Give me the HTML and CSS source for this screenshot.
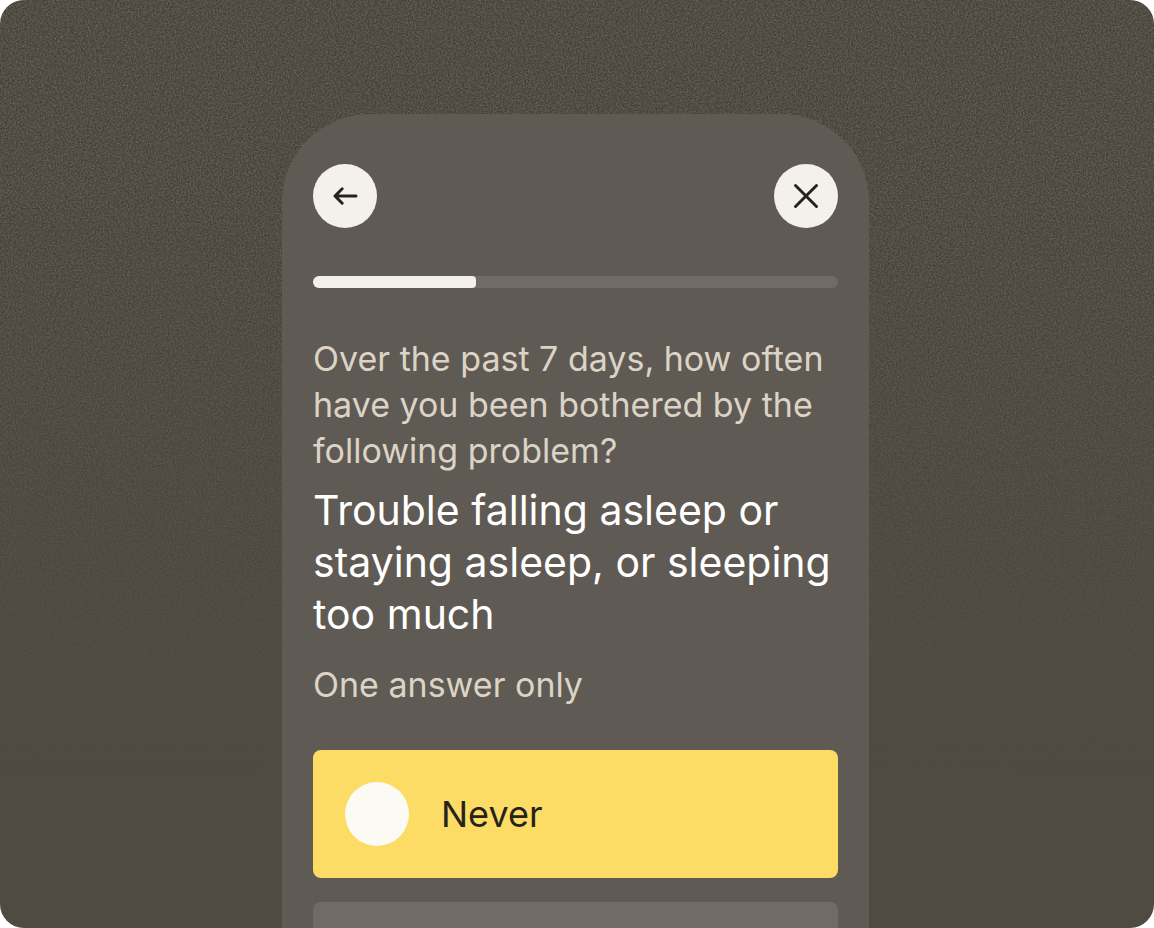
FILE: index.html
```html
<!DOCTYPE html>
<html lang="en">
<head>
<meta charset="utf-8">
<meta name="viewport" content="width=device-width, initial-scale=1">
<title>Questionnaire</title>
<link rel="stylesheet" href="styles.css">
</head>
<body>
<div class="stage">
  <svg class="grain" aria-hidden="true">
    <filter id="grain" x="0" y="0" width="100%" height="100%" color-interpolation-filters="sRGB">
      <feTurbulence type="fractalNoise" baseFrequency="0.6" numOctaves="2" seed="4"/>
      <feColorMatrix values="2 0 0 0 -0.580  2 0 0 0 -0.590  2 0 0 0 -0.650  0 0 0 0 1"/>
    </filter>
    <rect width="100%" height="100%" filter="url(#grain)"/>
  </svg>
  <main class="phone">
    <header class="nav">
      <button class="round-button" type="button" aria-label="Back">
        <svg class="icon" viewBox="0 0 32 32" aria-hidden="true"><path d="M27 16H6M13.200 8.800L6 16l7.200 7.200"/></svg>
      </button>
      <button class="round-button" type="button" aria-label="Close">
        <svg class="icon" viewBox="0 0 32 32" aria-hidden="true"><path d="M5.500 5.500l21 21M26.500 5.500l-21 21"/></svg>
      </button>
    </header>
    <div class="progress" role="progressbar" aria-label="Progress" aria-valuenow="31" aria-valuemin="0" aria-valuemax="100">
      <div class="progress-fill" style="width: 31%"></div>
    </div>
    <form class="question">
      <p class="text">Over the past 7 days, how often have you been bothered by the following problem?</p>
      <h1 class="title">Trouble falling asleep or staying asleep, or sleeping too much</h1>
      <p class="text">One answer only</p>
      <div class="options">
        <label class="option option-active" for="never">
          <input class="radio" type="radio" id="never" name="answer">
          <span>Never</span>
        </label>
        <div class="option option-next"></div>
      </div>
    </form>
  </main>
</div>
</body>
</html>
```

FILE: styles.css
```css
* {
  box-sizing: border-box;
}

body {
  margin: 0;
  background: #fff;
  font-family: Inter, "Liberation Sans", sans-serif;
  font-weight: 400;
}

.stage {
  position: relative;
  display: grid;
  grid-template-columns: 282fr 587fr 285fr;
  height: 100vh;
  padding-top: 114px;
  border-radius: 24px;
  overflow: hidden;
  background: #4f4a42;
}

.grain {
  position: absolute;
  inset: 0;
  width: 100%;
  height: 100%;
  opacity: 0.12;
  mask-image: linear-gradient(#000 20%, transparent 85%);
}

.phone {
  position: relative;
  grid-column: 2;
  display: flex;
  flex-direction: column;
  min-height: 0;
  padding: 50px 31px 0;
  border-radius: 88px 88px 0 0;
  background: #605a54;
}

.nav {
  display: flex;
  justify-content: space-between;
}

.round-button {
  display: grid;
  place-items: center;
  width: 64px;
  height: 64px;
  padding: 0;
  border: 0;
  border-radius: 50%;
  background: #f4f1ea;
  color: #26231d;
}

.icon {
  width: 32px;
  height: 32px;
  fill: none;
  stroke: currentColor;
  stroke-width: 3;
  stroke-linecap: round;
  stroke-linejoin: round;
}

.progress {
  flex: none;
  height: 12px;
  margin-top: 48px;
  border-radius: 6px;
  overflow: hidden;
  background: #706b65;
}

.progress-fill {
  height: 100%;
  border-radius: 4px;
  background: #f4f1ea;
}

.question {
  display: flex;
  flex: 1;
  flex-direction: column;
  margin-top: 48px;
}

.text {
  margin: 0;
  color: #dbd4c6;
  font-size: 34px;
  line-height: 46px;
}

.title {
  margin: 10px 0 22px;
  color: #fff;
  font-size: 41px;
  font-weight: 400;
  line-height: 52px;
}

.options {
  display: flex;
  flex: 1;
  flex-direction: column;
  gap: 24px;
  margin-top: 42px;
}

.option {
  border-radius: 8px;
}

.option-active {
  display: flex;
  align-items: center;
  gap: 32px;
  padding: 32px;
  background: #fcdc65;
  color: #26231d;
  font-size: 36px;
}

.radio {
  appearance: none;
  width: 64px;
  height: 64px;
  margin: 0;
  border-radius: 50%;
  background: #fbfaf3;
}

.option-next {
  flex: 1;
  border-radius: 8px 8px 0 0;
  background: #706b65;
}
```
